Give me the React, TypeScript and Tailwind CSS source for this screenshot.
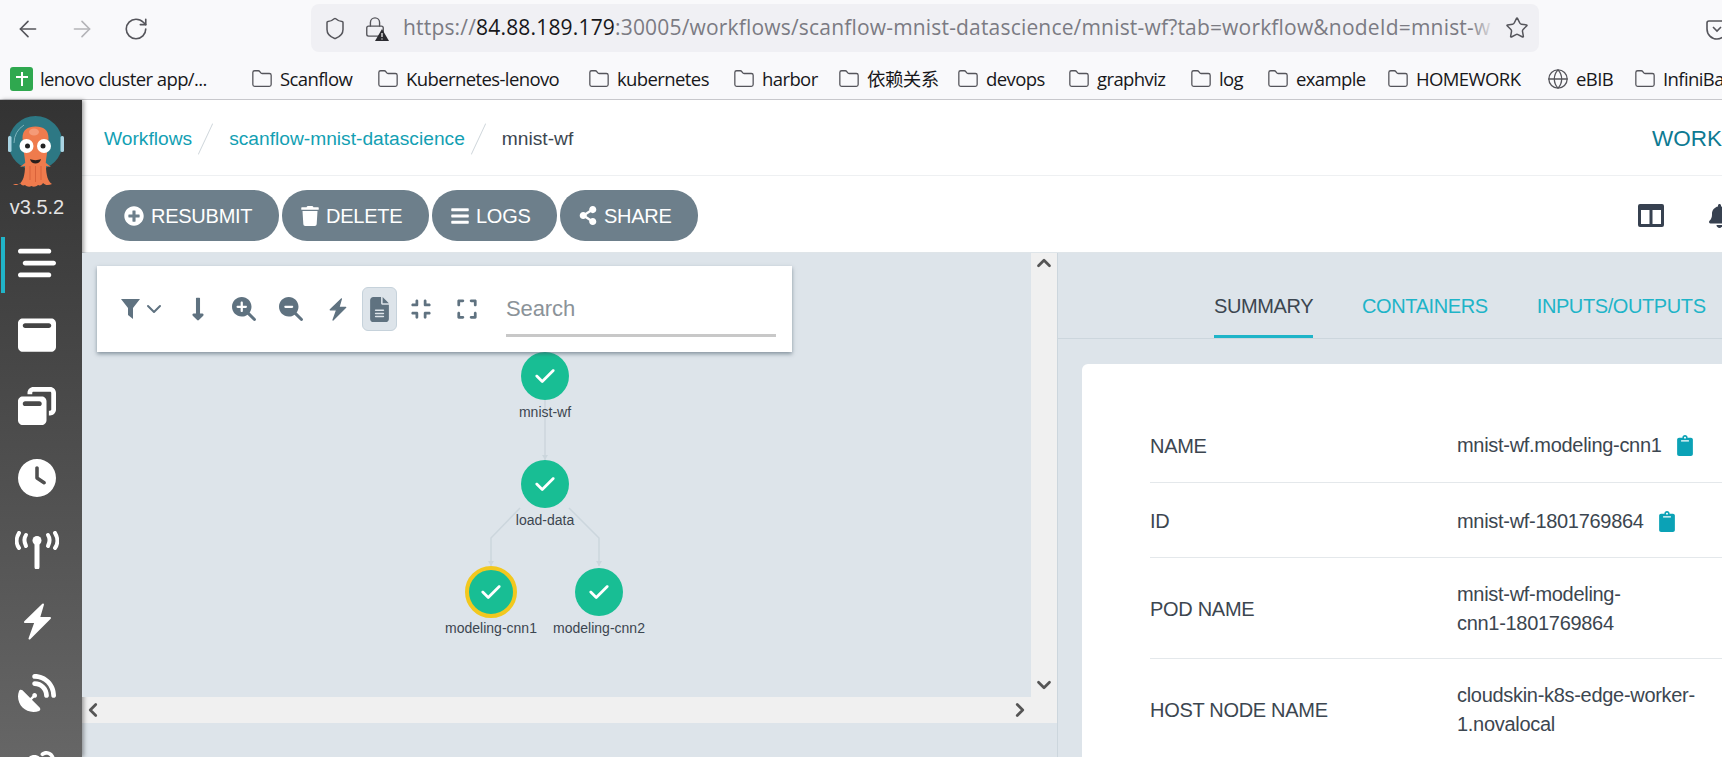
import type { ReactNode } from "react";
import { ArrowLeft, ArrowRight, RotateCw, Shield, Lock, Star, Folder, Globe, ChevronDown, ChevronUp, ChevronLeft, ChevronRight } from "lucide-react";
import { FaPlusCircle, FaTrash, FaBars, FaShareAlt, FaLongArrowAltDown, FaClipboard } from "react-icons/fa";
import {
  FaBarsStaggered,
  FaWindowMaximize,
  FaWindowRestore,
  FaClock,
  FaSatelliteDish,
  FaLink,
  FaMagnifyingGlassPlus,
  FaMagnifyingGlassMinus,
  FaFileLines,
  FaCompress,
  FaExpand,
  FaBell,
  FaCheck,
} from "react-icons/fa6";

const bookmarks = [
  { label: "Scanflow", w: "w-[126px]" },
  { label: "Kubernetes-lenovo", w: "w-[211px]" },
  { label: "kubernetes", w: "w-[145px]" },
  { label: "harbor", w: "w-[105px]" },
  { label: "依赖关系", w: "w-[119px]" },
  { label: "devops", w: "w-[111px]" },
  { label: "graphviz", w: "w-[122px]" },
  { label: "log", w: "w-[77px]" },
  { label: "example", w: "w-[120px]" },
  { label: "HOMEWORK", w: "w-[160px]" },
];

const nodes = [
  { name: "mnist-wf", pos: "left-[439px] top-[99px]" },
  { name: "load-data", pos: "left-[439px] top-[207px]" },
  { name: "modeling-cnn1", pos: "left-[385px] top-[315px]", selected: true },
  { name: "modeling-cnn2", pos: "left-[493px] top-[315px]" },
];

const rows = [
  { label: "NAME", value: "mnist-wf.modeling-cnn1", copy: true, h: "h-[76px]" },
  { label: "ID", value: "mnist-wf-1801769864", copy: true, h: "h-[75px]" },
  { label: "POD NAME", value: "mnist-wf-modeling-\ncnn1-1801769864", h: "h-[101px]" },
  { label: "HOST NODE NAME", value: "cloudskin-k8s-edge-worker-\n1.novalocal", h: "h-[101px]" },
];

function Bolt({ className }: { className: string }) {
  return (
    <svg viewBox="0 0 29 37" className={className} fill="currentColor" stroke="currentColor" strokeWidth="2" strokeLinejoin="round">
      <path d="M20 1.500L2 19h10.500L6.500 35.500 27 15H16z" />
    </svg>
  );
}

function Bookmark({ label, icon, w }: { label: string; icon?: ReactNode; w: string }) {
  return (
    <div className={`flex shrink-0 items-center gap-[7px] ${w}`}>
      {icon ?? <Folder className="h-[22px] w-[22px] shrink-0 text-[#55555b]" strokeWidth={1.4} />}
      <span className="whitespace-nowrap">{label}</span>
    </div>
  );
}

function BrowserBar() {
  return (
    <div className="h-[100px] shrink-0 overflow-hidden border-b border-[#c8c8cc] bg-[#f9f9fb] font-['Open_Sans','Noto_Sans_CJK_SC',sans-serif] text-[#17171a]">
      <div className="flex h-[60px] items-center pb-[3px]">
        <div className="flex w-[311px] shrink-0 items-center pl-[15px] text-[#55555b]">
          <ArrowLeft className="h-[26px] w-[26px]" strokeWidth={1.5} />
          <ArrowRight className="ml-[28px] h-[26px] w-[26px] text-[#b4b4b8]" strokeWidth={1.5} />
          <RotateCw className="ml-[28px] h-[26px] w-[26px]" strokeWidth={1.5} />
        </div>
        <div className="mb-[1px] flex h-[48px] w-[1228px] shrink-0 items-center rounded-[8px] bg-[#f0f0f4] pl-[12px] pr-[10px] text-[#55555b]">
          <Shield className="h-[25px] w-[24px] shrink-0" strokeWidth={1.5} />
          <div className="relative ml-[17px] h-[26px] w-[24px] shrink-0">
            <Lock className="h-[24px] w-[22px]" strokeWidth={1.5} />
            <svg viewBox="0 0 14 12" className="absolute bottom-0 right-[-1px] h-[12px] w-[14px]">
              <path d="M7 0l7 12H0z" fill="#2b2b30" />
              <path d="M7 4v4M7 9.500v1" stroke="#fff" strokeWidth="1.2" />
            </svg>
          </div>
          <div className="relative ml-[15px] min-w-0 flex-1 overflow-hidden whitespace-nowrap text-[21px] tracking-[0.18px] text-[#7b7b83]">
            https://<span className="text-[#17171a]">84.88.189.179</span>:30005/workflows/scanflow-mnist-datascience/mnist-wf?tab=workflow&amp;nodeId=mnist-w
            <span className="absolute inset-y-0 right-0 w-[24px] bg-gradient-to-r from-transparent to-[#f0f0f4]" />
          </div>
          <Star className="ml-[10px] h-[24px] w-[24px] shrink-0" strokeWidth={1.5} />
        </div>
        <svg className="ml-[167px] h-[24px] w-[22px] shrink-0 text-[#55555b]" viewBox="0 0 22 24" fill="none" stroke="currentColor" strokeWidth="1.6">
          <path d="M3 4h16a2 2 0 0 1 2 2v6a10 10 0 0 1-20 0V6a2 2 0 0 1 2-2z" />
          <path d="M7 10l4 4 4-4" />
        </svg>
      </div>
      <div className="flex h-[38px] items-center pl-[10px] text-[18.5px] tracking-[-0.6px]">
        <Bookmark
          w="w-[241px]"
          label="lenovo cluster app/..."
          icon={
            <span className="flex h-[24px] w-[23px] shrink-0 items-center justify-center rounded-[3px] bg-[#2fa84f]">
              <svg viewBox="0 0 14 16" className="h-[16px] w-[14px]" fill="#fff">
                <path d="M6 1h2v4h5v2H8v8H6V7H1V5h5z" />
              </svg>
            </span>
          }
        />
        {bookmarks.map((b) => (
          <Bookmark key={b.label} label={b.label} w={b.w} />
        ))}
        <Bookmark w="w-[87px]" label="eBIB" icon={<Globe className="h-[22px] w-[22px] shrink-0 text-[#55555b]" strokeWidth={1.4} />} />
        <Bookmark w="w-[88px]" label="InfiniBa" />
      </div>
    </div>
  );
}

function ArgoLogo() {
  return (
    <svg viewBox="0 0 58 72" className="h-[72px] w-[58px]">
      <circle cx="27.500" cy="27" r="27" fill="#2d7884" />
      <path d="M6 27a22 22 0 0 1 10-18" fill="none" stroke="#7fb3bb" strokeWidth="1" />
      <rect x="0" y="20" width="3.500" height="16" rx="1.500" fill="#a9d3e2" />
      <rect x="52.500" y="20" width="3.500" height="16" rx="1.500" fill="#a9d3e2" />
      <path d="M14.500 22c0-8 5-11.500 13-11.500s13 3.500 13 11.500c0 10-3 20-3 30h-20c0-10-3-20-3-30z" fill="#ef7b4d" />
      <path d="M11 68c4-2 6-9 6-18l-5 1 5-4h21l5 4-5-1c0 9 2 16 6 18-4 2-7 1-9-1-1 2-3 3-5 2-2 2-5 2-6.500 1-1.500 1-4.500 1-6.500-1-2 1-4 0-5-2-2 2-5 3-7 1z" fill="#ef7b4d" />
      <path d="M22 50v14M27.500 50v16M33 50v14" stroke="#d9623a" strokeWidth="1" />
      <circle cx="18.500" cy="30" r="7" fill="#fff" />
      <circle cx="36" cy="30" r="7" fill="#fff" />
      <circle cx="19.500" cy="30" r="2.500" fill="#222" />
      <circle cx="35" cy="30" r="2.500" fill="#222" />
      <path d="M22 43c3 1.500 8 1.500 11 0-1 6-10 6-11 0z" fill="#2a1f1c" />
      <ellipse cx="26" cy="16" rx="5" ry="3.500" fill="#f59a77" />
    </svg>
  );
}

function Sidebar() {
  const icon = "h-[38px] w-[38px]";
  return (
    <aside className="relative flex w-[82px] shrink-0 flex-col items-center bg-gradient-to-b from-[#333333] to-[#666666] pr-[8px] text-white shadow-[2px_0_4px_rgba(0,0,0,0.35)]">
      <div className="mt-[16px] h-[72px]">
        <ArgoLogo />
      </div>
      <div className="mt-[7px] text-[20px] leading-[24px] text-[#e4e4e4]">v3.5.2</div>
      <span className="absolute left-[1px] top-[137px] h-[56px] w-[4px] bg-[#20b4c8]" />
      <div className="mt-[8px] flex flex-col items-center">
        {[
          <FaBarsStaggered key="timeline" className={icon} />,
          <FaWindowMaximize key="workflows" className={icon} />,
          <FaWindowRestore key="templates" className={icon} />,
          <FaClock key="cron" className={icon} />,
          <svg key="sensors" viewBox="0 0 44 38" className="h-[38px] w-[44px]" fill="none" stroke="currentColor" strokeLinecap="round">
            <circle cx="22" cy="9.500" r="4.500" fill="currentColor" stroke="none" />
            <path d="M22 10v26" strokeWidth="5" />
            <path d="M4 2c-3 5-3 11 0 15M40 2c3 5 3 11 0 15" strokeWidth="4" />
            <path d="M11 4c-2 3-2 7 0 11M33 4c2 3 2 7 0 11" strokeWidth="4" />
          </svg>,
          <Bolt key="events" className="h-[37px] w-[29px]" />,
          <FaSatelliteDish key="sources" className={icon} />,
          <FaLink key="links" className={icon} />,
        ].map((item) => (
          <div key={item.key} className="flex h-[71.7px] w-[74px] items-center justify-center">
            {item}
          </div>
        ))}
      </div>
    </aside>
  );
}

function ActionButton({ icon, label, width }: { icon: ReactNode; label: string; width: string }) {
  return (
    <button className={`flex h-[51px] items-center gap-[7px] rounded-[25px] bg-[#6d7f8b] pl-[19px] text-[20px] tracking-[-0.25px] text-white ${width}`}>
      {icon}
      {label}
    </button>
  );
}

function GraphNode({ name, pos, selected }: { name: string; pos: string; selected?: boolean }) {
  return (
    <div className={`absolute h-[48px] w-[48px] ${pos}`}>
      <div
        className={
          selected
            ? "-m-[2px] flex h-[52px] w-[52px] items-center justify-center rounded-full border-[4px] border-[#f2c81e] bg-[#18be94] text-white"
            : "flex h-[48px] w-[48px] items-center justify-center rounded-full bg-[#18be94] text-white"
        }
      >
        <FaCheck className="h-[22px] w-[22px]" />
      </div>
      <div className="absolute left-1/2 top-[51px] -translate-x-1/2 whitespace-nowrap text-[14px] leading-[18px] text-[#3c4650]">{name}</div>
    </div>
  );
}

function GraphPane() {
  const tool = "flex h-[44px] items-center justify-center text-[#5f7280]";
  return (
    <div className="relative h-[444px] min-w-0 flex-1 overflow-hidden bg-[#dde4ea]">
      <svg className="absolute inset-0 h-full w-full" fill="none" stroke="#ccd6dd" strokeWidth="1.5">
        <path d="M463 147V207" />
        <path d="M438 255L409 285V313" />
        <path d="M487 255L517 285V313" />
        <path d="M460 202h6l-3 5zM406 308h6l-3 5zM514 308h6l-3 5z" fill="#ccd6dd" stroke="none" />
      </svg>
      {nodes.map((n) => (
        <GraphNode key={n.name} {...n} />
      ))}
      <div className="absolute left-[15px] top-[13px] flex h-[86px] w-[695px] items-center bg-white pl-[24px] shadow-[0_2px_4px_rgba(60,80,95,0.55)]">
        <div className="flex w-[43px] items-center gap-[2px] text-[#5f7280]">
          <svg viewBox="0 0 19 20" className="h-[20px] w-[19px] shrink-0" fill="currentColor">
            <path d="M0 0h19L12 9v11l-5-4V9z" />
          </svg>
          <ChevronDown className="h-[24px] w-[24px] shrink-0" strokeWidth={2} />
        </div>
        <div className={`${tool} ml-[20px] w-[28px]`}>
          <FaLongArrowAltDown className="h-[26px] w-[26px]" />
        </div>
        <div className={`${tool} ml-[19px] w-[26px]`}>
          <FaMagnifyingGlassPlus className="h-[24px] w-[24px]" />
        </div>
        <div className={`${tool} ml-[21px] w-[26px]`}>
          <FaMagnifyingGlassMinus className="h-[24px] w-[24px]" />
        </div>
        <div className={`${tool} ml-[24px] w-[20px]`}>
          <Bolt className="h-[23px] w-[18px]" />
        </div>
        <div className={`${tool} ml-[14px] w-[35px] rounded-[6px] border border-[#c6d2db] bg-[#dde4ea]`}>
          <FaFileLines className="h-[25px] w-[19px]" />
        </div>
        <div className={`${tool} ml-[12px] w-[24px]`}>
          <FaCompress className="h-[22px] w-[22px]" />
        </div>
        <div className={`${tool} ml-[22px] w-[24px]`}>
          <FaExpand className="h-[22px] w-[22px]" />
        </div>
        <div className="ml-[27px] flex h-[56px] w-[270px] items-end border-b-[3px] border-[#c8c8c8] pb-[10px] text-[22px] leading-[30px] tracking-[-0.1px] text-[#8b9399]">Search</div>
      </div>
    </div>
  );
}

function LeftPane() {
  const arrow = "h-[22px] w-[22px] text-[#555555]";
  return (
    <div className="flex w-[975px] shrink-0 flex-col">
      <div className="flex">
        <GraphPane />
        <div className="flex h-[444px] w-[26px] shrink-0 flex-col items-center justify-between bg-[#f0f0f0] pb-[1px]">
          <ChevronUp className={`${arrow} -mt-[1px]`} strokeWidth={3} />
          <ChevronDown className={arrow} strokeWidth={3} />
        </div>
      </div>
      <div className="flex h-[26px] shrink-0 items-center justify-between bg-[#f0f0f0] pr-[26px]">
        <ChevronLeft className={arrow} strokeWidth={3} />
        <ChevronRight className={arrow} strokeWidth={3} />
      </div>
    </div>
  );
}

function DetailsPane() {
  return (
    <div className="flex min-w-0 flex-1 flex-col border-l border-[#ccd6dd]">
      <div className="flex h-[86px] shrink-0 items-end gap-[49px] border-b border-[#ccd6dd] pl-[156px] text-[20px] tracking-[-0.4px] text-[#1eb4c8]">
        <div className="h-[68px] border-b-[3px] border-[#1eb4c8] pt-[21px] leading-[30px] text-[#3c4650]">SUMMARY</div>
        <div className="h-[68px] pt-[21px] leading-[30px]">CONTAINERS</div>
        <div className="h-[68px] whitespace-nowrap pt-[21px] leading-[30px]">INPUTS/OUTPUTS</div>
      </div>
      <div className="ml-[24px] mt-[25px] min-h-0 flex-1 rounded-tl-[6px] bg-white pl-[68px] pt-[43px] text-[20px] tracking-[-0.3px] text-[#3c4650]">
        {rows.map((r) => (
          <div key={r.label} className={`flex items-center border-b border-[#e4e8eb] pt-[2px] ${r.h}`}>
            <div className="w-[307px] shrink-0">{r.label}</div>
            <div className="flex items-center gap-[15px]">
              <span className="whitespace-pre leading-[29px]">{r.value}</span>
              {r.copy && <FaClipboard className="h-[21px] w-[16px] text-[#0ba2b6]" />}
            </div>
          </div>
        ))}
      </div>
    </div>
  );
}

export default function App() {
  return (
    <div className="flex h-[757px] w-[1722px] flex-col overflow-hidden bg-white font-['Liberation_Sans',sans-serif]">
      <BrowserBar />
      <div className="flex min-h-0 flex-1">
        <Sidebar />
        <main className="flex min-w-0 flex-1 flex-col overflow-hidden">
          <div className="flex h-[76px] shrink-0 items-center border-b border-[#eef0f2] pl-[22px] pt-[3px] text-[19.2px]">
            <span className="text-[#139fb3]">Workflows</span>
            <span className="mx-[13px] h-[34px] w-px rotate-[25deg] bg-[#cfd6db]" />
            <span className="ml-[10px] text-[#139fb3]">scanflow-mnist-datascience</span>
            <span className="mx-[13px] h-[34px] w-px rotate-[25deg] bg-[#cfd6db]" />
            <span className="ml-[10px] text-[#3c4650]">mnist-wf</span>
            <span className="ml-auto text-[22.5px] text-[#0d7a92]">WORK</span>
          </div>
          <div className="flex h-[77px] shrink-0 items-center gap-[3px] border-b border-[#dfe5e9] pl-[23px] pt-[3px]">
            <ActionButton width="w-[174px]" label="RESUBMIT" icon={<FaPlusCircle className="h-[20px] w-[20px]" />} />
            <ActionButton width="w-[147px]" label="DELETE" icon={<FaTrash className="h-[20px] w-[18px]" />} />
            <ActionButton width="w-[125px]" label="LOGS" icon={<FaBars className="h-[20px] w-[18px]" />} />
            <ActionButton width="w-[138px]" label="SHARE" icon={<FaShareAlt className="h-[19px] w-[18px]" />} />
            <div className="ml-auto flex items-center gap-[42px] text-[#374150]">
              <svg viewBox="0 0 26 23" className="h-[23px] w-[26px]" fill="currentColor">
                <path fillRule="evenodd" d="M2 0h22a2 2 0 0 1 2 2v19a2 2 0 0 1-2 2H2a2 2 0 0 1-2-2V2a2 2 0 0 1 2-2zM3 6v14h8.500V6zM14.500 6v14H23V6z" />
              </svg>
              <FaBell className="mr-[-11px] h-[24px] w-[27px]" />
            </div>
          </div>
          <div className="flex min-h-0 flex-1 bg-[#dde4ea]">
            <LeftPane />
            <DetailsPane />
          </div>
        </main>
      </div>
    </div>
  );
}
